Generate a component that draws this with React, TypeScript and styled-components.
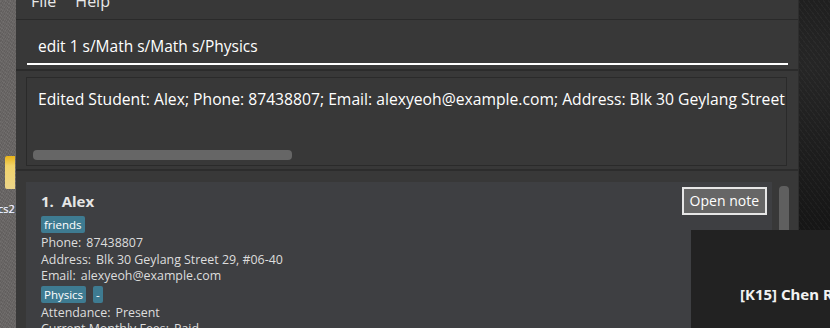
import React from "react";
import styled, { createGlobalStyle } from "styled-components";

const GlobalStyle = createGlobalStyle`
  html, body {
    margin: 0;
    padding: 0;
    width: 830px;
    height: 328px;
    overflow: hidden;
    background: #1b1b1b;
  }
  * {
    box-sizing: border-box;
  }
`;

const font = `"Open Sans", "Noto Sans", sans-serif`;

const Screen = styled.div`
  position: relative;
  display: flex;
  width: 830px;
  height: 328px;
  overflow: hidden;
  font-family: ${font};
`;

const LeftDesktop = styled.div`
  width: 16px;
  flex-shrink: 0;
  background:
    repeating-linear-gradient(37deg, rgba(255,255,255,0.05) 0 1px, transparent 1px 3px),
    repeating-linear-gradient(-61deg, rgba(0,0,0,0.08) 0 1px, transparent 1px 2px),
    #6a6766;
  display: flex;
  flex-direction: column;
  padding-top: 156px;
`;

const DesktopIcon = styled.div`
  width: 10px;
  height: 33px;
  margin-left: 5px;
  border-radius: 2px 0 0 2px;
  background: linear-gradient(180deg, #e8b318 0%, #f2d36a 30%, #ecd58a 100%);
`;

const DesktopLabel = styled.div`
  margin-top: 14px;
  font-size: 11px;
  line-height: 12px;
  color: #ffffff;
  text-shadow: 1px 0 #2b6fd0, -1px 0 #c48a2a;
  white-space: nowrap;
  overflow: hidden;
  margin-left: -2px;
`;

const Window = styled.div`
  width: 783px;
  flex-shrink: 0;
  display: flex;
  flex-direction: column;
  background: #383838;
  border-right: 1px solid #2e2e2e;
  overflow: hidden;
`;

const MenuBar = styled.div`
  flex-shrink: 0;
  height: 20px;
  display: flex;
  gap: 19px;
  padding-left: 15px;
  border-bottom: 1px solid #2a2a2a;
  overflow: hidden;
`;

const MenuItem = styled.span`
  margin-top: -9px;
  font-size: 16px;
  line-height: 20px;
  color: #e8e8e8;
`;

const CommandPane = styled.div`
  flex-shrink: 0;
  height: 51px;
  padding: 10px 10px 0 11px;
  border-bottom: 2px solid #2b2b2b;
`;

const CommandInput = styled.div`
  height: 35px;
  padding: 6px 0 0 11px;
  border-bottom: 2px solid #ffffff;
  font-size: 15.5px;
  line-height: 20px;
  color: #ffffff;
`;

const ResultPane = styled.div`
  flex-shrink: 0;
  height: 100px;
  padding: 6px 11px 0 10px;
  border-bottom: 2px solid #2c2c2c;
`;

const ResultBox = styled.div`
  height: 89px;
  border: 1px solid #2a2a2a;
  display: flex;
  flex-direction: column;
  overflow: hidden;
`;

const ResultText = styled.div`
  padding: 10px 0 0 11px;
  font-size: 15.7px;
  line-height: 22px;
  color: #ffffff;
  white-space: nowrap;
  flex: 1;
`;

const HScrollThumb = styled.div`
  width: 259px;
  height: 10px;
  margin: 0 0 5px 6px;
  border-radius: 4px;
  background: #666666;
`;

const ListPane = styled.div`
  flex: 1;
  min-height: 0;
  display: flex;
  padding: 11px 0 0 10px;
  background: #383838;
  overflow: hidden;
`;

const Card = styled.div`
  flex: 1;
  align-self: flex-start;
  background: #3e3f42;
  padding: 9px 5px 0 15px;
  display: flex;
  align-items: flex-start;
`;

const CardBody = styled.div`
  flex: 1;
  display: flex;
  flex-direction: column;
  align-items: flex-start;
`;

const Name = styled.div`
  font-size: 15px;
  font-weight: 700;
  line-height: 20px;
  color: #e6e6e6;
  margin-bottom: 4px;
  white-space: pre;
`;

const TagRow = styled.div`
  display: flex;
  gap: 7px;
  margin: 1px 0 2px;
`;

const Tag = styled.span`
  background: #3e7b91;
  color: #ffffff;
  font-size: 11.5px;
  line-height: 17px;
  padding: 0 3px;
  border-radius: 2px;
`;

const Field = styled.div`
  font-size: 12.4px;
  line-height: 16.6px;
  color: #dddddd;
  white-space: nowrap;
`;

const FieldLabel = styled.span`
  margin-right: 5px;
`;

const OpenNote = styled.button`
  margin-top: -4px;
  height: 28px;
  padding: 0 6px;
  background: #666666;
  border: 2px solid #e6e6e6;
  color: #ffffff;
  font-family: ${font};
  font-size: 14px;
  line-height: 22px;
`;

const VScroll = styled.div`
  width: 26px;
  display: flex;
  justify-content: center;
  padding: 4px 3px 0 0;
`;

const VThumb = styled.div`
  width: 10px;
  height: 100px;
  border-radius: 4px;
  background: #5f5f5f;
`;

const RightDesktop = styled.div`
  flex: 1;
  background:
    repeating-linear-gradient(53deg, rgba(255,255,255,0.03) 0 1px, transparent 1px 4px),
    radial-gradient(circle at 30% 20%, #262626 0, #161616 60%);
`;

const Toast = styled.div`
  position: absolute;
  left: 691px;
  top: 230px;
  width: 139px;
  height: 98px;
  background: #222222;
  padding: 54px 0 0 49px;
  font-family: "Noto Sans", "Open Sans", sans-serif;
  font-size: 15px;
  font-weight: 700;
  color: #f2f2f2;
  white-space: nowrap;
  overflow: hidden;
`;

const fields = [
  ["Phone:", "87438807"],
  ["Address:", "Blk 30 Geylang Street 29, #06-40"],
  ["Email:", "alexyeoh@example.com"],
];

const App = () => (
  <>
    <GlobalStyle />
    <Screen>
      <LeftDesktop>
        <DesktopIcon />
        <DesktopLabel>cs2</DesktopLabel>
      </LeftDesktop>
      <Window>
        <MenuBar>
          <MenuItem>File</MenuItem>
          <MenuItem>Help</MenuItem>
        </MenuBar>
        <CommandPane>
          <CommandInput>edit 1 s/Math s/Math s/Physics</CommandInput>
        </CommandPane>
        <ResultPane>
          <ResultBox>
            <ResultText>
              Edited Student: Alex; Phone: 87438807; Email: alexyeoh@example.com; Address: Blk 30 Geylang Street 29, #06-40
            </ResultText>
            <HScrollThumb />
          </ResultBox>
        </ResultPane>
        <ListPane>
          <Card>
            <CardBody>
              <Name>{"1.  Alex"}</Name>
              <TagRow>
                <Tag>friends</Tag>
              </TagRow>
              {fields.map(([label, value]) => (
                <Field key={label}>
                  <FieldLabel>{label}</FieldLabel>
                  {value}
                </Field>
              ))}
              <TagRow>
                <Tag>Physics</Tag>
                <Tag>-</Tag>
              </TagRow>
              <Field>
                <FieldLabel>Attendance:</FieldLabel>
                Present
              </Field>
              <Field>
                <FieldLabel>Current Monthly Fees:</FieldLabel>
                Paid
              </Field>
            </CardBody>
            <OpenNote>Open note</OpenNote>
          </Card>
          <VScroll>
            <VThumb />
          </VScroll>
        </ListPane>
      </Window>
      <RightDesktop />
      <Toast>[K15] Chen R</Toast>
    </Screen>
  </>
);

export default App;
